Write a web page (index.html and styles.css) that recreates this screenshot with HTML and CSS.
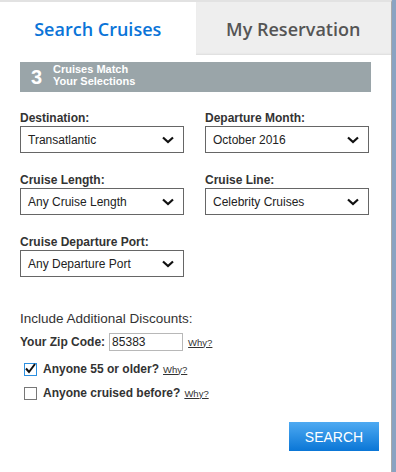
FILE: index.html
```html
<!DOCTYPE html>
<html lang="en">
<head>
  <meta charset="UTF-8">
  <title>Search Cruises</title>
  <link rel="stylesheet" href="styles.css">
</head>
<body>
  <div id="panel">
    <div class="tabs">
      <div class="tab active">Search Cruises</div>
      <div class="tab">My Reservation</div>
    </div>

    <div class="content">
      <div class="match">
        <span class="match-count">3</span>
        <span class="match-text">Cruises Match<br>Your Selections</span>
      </div>

      <div class="fields">
        <div class="field">
          <label>Destination:</label>
          <div class="select"><span>Transatlantic</span><svg width="12" height="8" viewBox="0 0 12 8"><polyline points="1,1.5 6,6 11,1.5" fill="none" stroke="#111" stroke-width="2.2"/></svg></div>
        </div>
        <div class="field">
          <label>Departure Month:</label>
          <div class="select"><span>October 2016</span><svg width="12" height="8" viewBox="0 0 12 8"><polyline points="1,1.5 6,6 11,1.5" fill="none" stroke="#111" stroke-width="2.2"/></svg></div>
        </div>
        <div class="field">
          <label>Cruise Length:</label>
          <div class="select"><span>Any Cruise Length</span><svg width="12" height="8" viewBox="0 0 12 8"><polyline points="1,1.5 6,6 11,1.5" fill="none" stroke="#111" stroke-width="2.2"/></svg></div>
        </div>
        <div class="field">
          <label>Cruise Line:</label>
          <div class="select"><span>Celebrity Cruises</span><svg width="12" height="8" viewBox="0 0 12 8"><polyline points="1,1.5 6,6 11,1.5" fill="none" stroke="#111" stroke-width="2.2"/></svg></div>
        </div>
        <div class="field">
          <label>Cruise Departure Port:</label>
          <div class="select"><span>Any Departure Port</span><svg width="12" height="8" viewBox="0 0 12 8"><polyline points="1,1.5 6,6 11,1.5" fill="none" stroke="#111" stroke-width="2.2"/></svg></div>
        </div>
      </div>

      <div class="discounts">
        <p class="disc-title">Include Additional Discounts:</p>
        <div class="zip-row">
          <span class="bold">Your Zip Code:</span>
          <span class="zip-input">85383</span>
          <a class="why">Why?</a>
        </div>
        <div class="check-row">
          <span class="checkbox checked"><svg width="13" height="13" viewBox="0 0 13 13"><polyline points="2,6.5 5,10 11,2" fill="none" stroke="#111" stroke-width="2"/></svg></span>
          <span class="bold">Anyone 55 or older?</span>
          <a class="why">Why?</a>
        </div>
        <div class="check-row">
          <span class="checkbox"></span>
          <span class="bold">Anyone cruised before?</span>
          <a class="why">Why?</a>
        </div>
      </div>

      <div class="actions">
        <button class="search">SEARCH</button>
      </div>
    </div>
  </div>
</body>
</html>
```

FILE: styles.css
```css
body {
  margin: 0;
  background-color: #8aa3c2;
  font-family: "Liberation Sans", Arial, sans-serif;
  color: #333;
}

#panel {
  width: 391px;
  height: 470px;
  background-color: #fff;
  border-top: 2px solid #e2e2e2;
  border-right: 1px solid #a9a9a9;
}

.tabs {
  display: flex;
  height: 53px;
}

.tab {
  flex: 1;
  display: flex;
  justify-content: center;
  align-items: center;
  font-family: "Open Sans", sans-serif;
  font-weight: 600;
  font-size: 18px;
  color: #555;
  background-color: #eeeeee;
  box-shadow: inset 0 -2px 2px -1px #dcdcdc;
}

.tab.active {
  color: #0a74d8;
  background-color: #fff;
  box-shadow: none;
}

.content {
  padding: 0 20px;
}

.match {
  margin-top: 7px;
  height: 30px;
  background-color: #9aa5a9;
  color: #fff;
  display: flex;
  align-items: center;
  font-weight: bold;
}

.match-count {
  font-size: 20px;
  width: 33px;
  text-align: center;
}

.match-text {
  font-size: 11px;
  line-height: 12px;
  margin-top: -4px;
}

.fields {
  display: grid;
  grid-template-columns: 164px 164px;
  column-gap: 21px;
  row-gap: 20px;
  margin-top: 19px;
}

.field label {
  display: block;
  font-weight: bold;
  font-size: 12px;
  line-height: 15px;
  color: #333;
}

.select {
  height: 25px;
  border: 1px solid #666;
  display: flex;
  align-items: center;
  justify-content: space-between;
  padding: 0 9px 0 7px;
  font-size: 12px;
  color: #222;
}

.discounts {
  margin-top: 34px;
}

.disc-title {
  margin: 0;
  font-size: 13.5px;
  line-height: 16px;
}

.bold {
  font-weight: bold;
  font-size: 12px;
}

.zip-row {
  display: flex;
  align-items: center;
  margin-top: 6px;
  height: 18px;
}

.zip-input {
  width: 70px;
  height: 16px;
  line-height: 16px;
  border: 1px solid #b8b8b8;
  margin-left: 4px;
  padding-left: 2px;
  font-size: 12px;
  color: #222;
}

.why {
  font-size: 9.5px;
  color: #333;
  text-decoration: underline;
  margin-left: 4px;
}

.zip-row .why {
  margin-left: 5px;
}

.check-row {
  display: flex;
  align-items: center;
  margin-left: 4px;
  margin-top: 10px;
  height: 16px;
}

.check-row + .check-row {
  margin-top: 8px;
}

.checkbox {
  width: 11px;
  height: 11px;
  border: 1px solid #777;
  margin-right: 6px;
  position: relative;
}

.checkbox.checked {
  border-color: #2b8fe0;
}

.checkbox svg {
  position: absolute;
  left: -1px;
  top: -2px;
}

.actions {
  display: flex;
  justify-content: flex-end;
  margin-top: 21px;
}

.search {
  width: 90px;
  height: 29px;
  margin-right: -8px;
  border: none;
  background: linear-gradient(#4eaaf2, #0a76d6);
  color: #fff;
  font-family: "Liberation Sans", Arial, sans-serif;
  font-size: 14px;
}
```
